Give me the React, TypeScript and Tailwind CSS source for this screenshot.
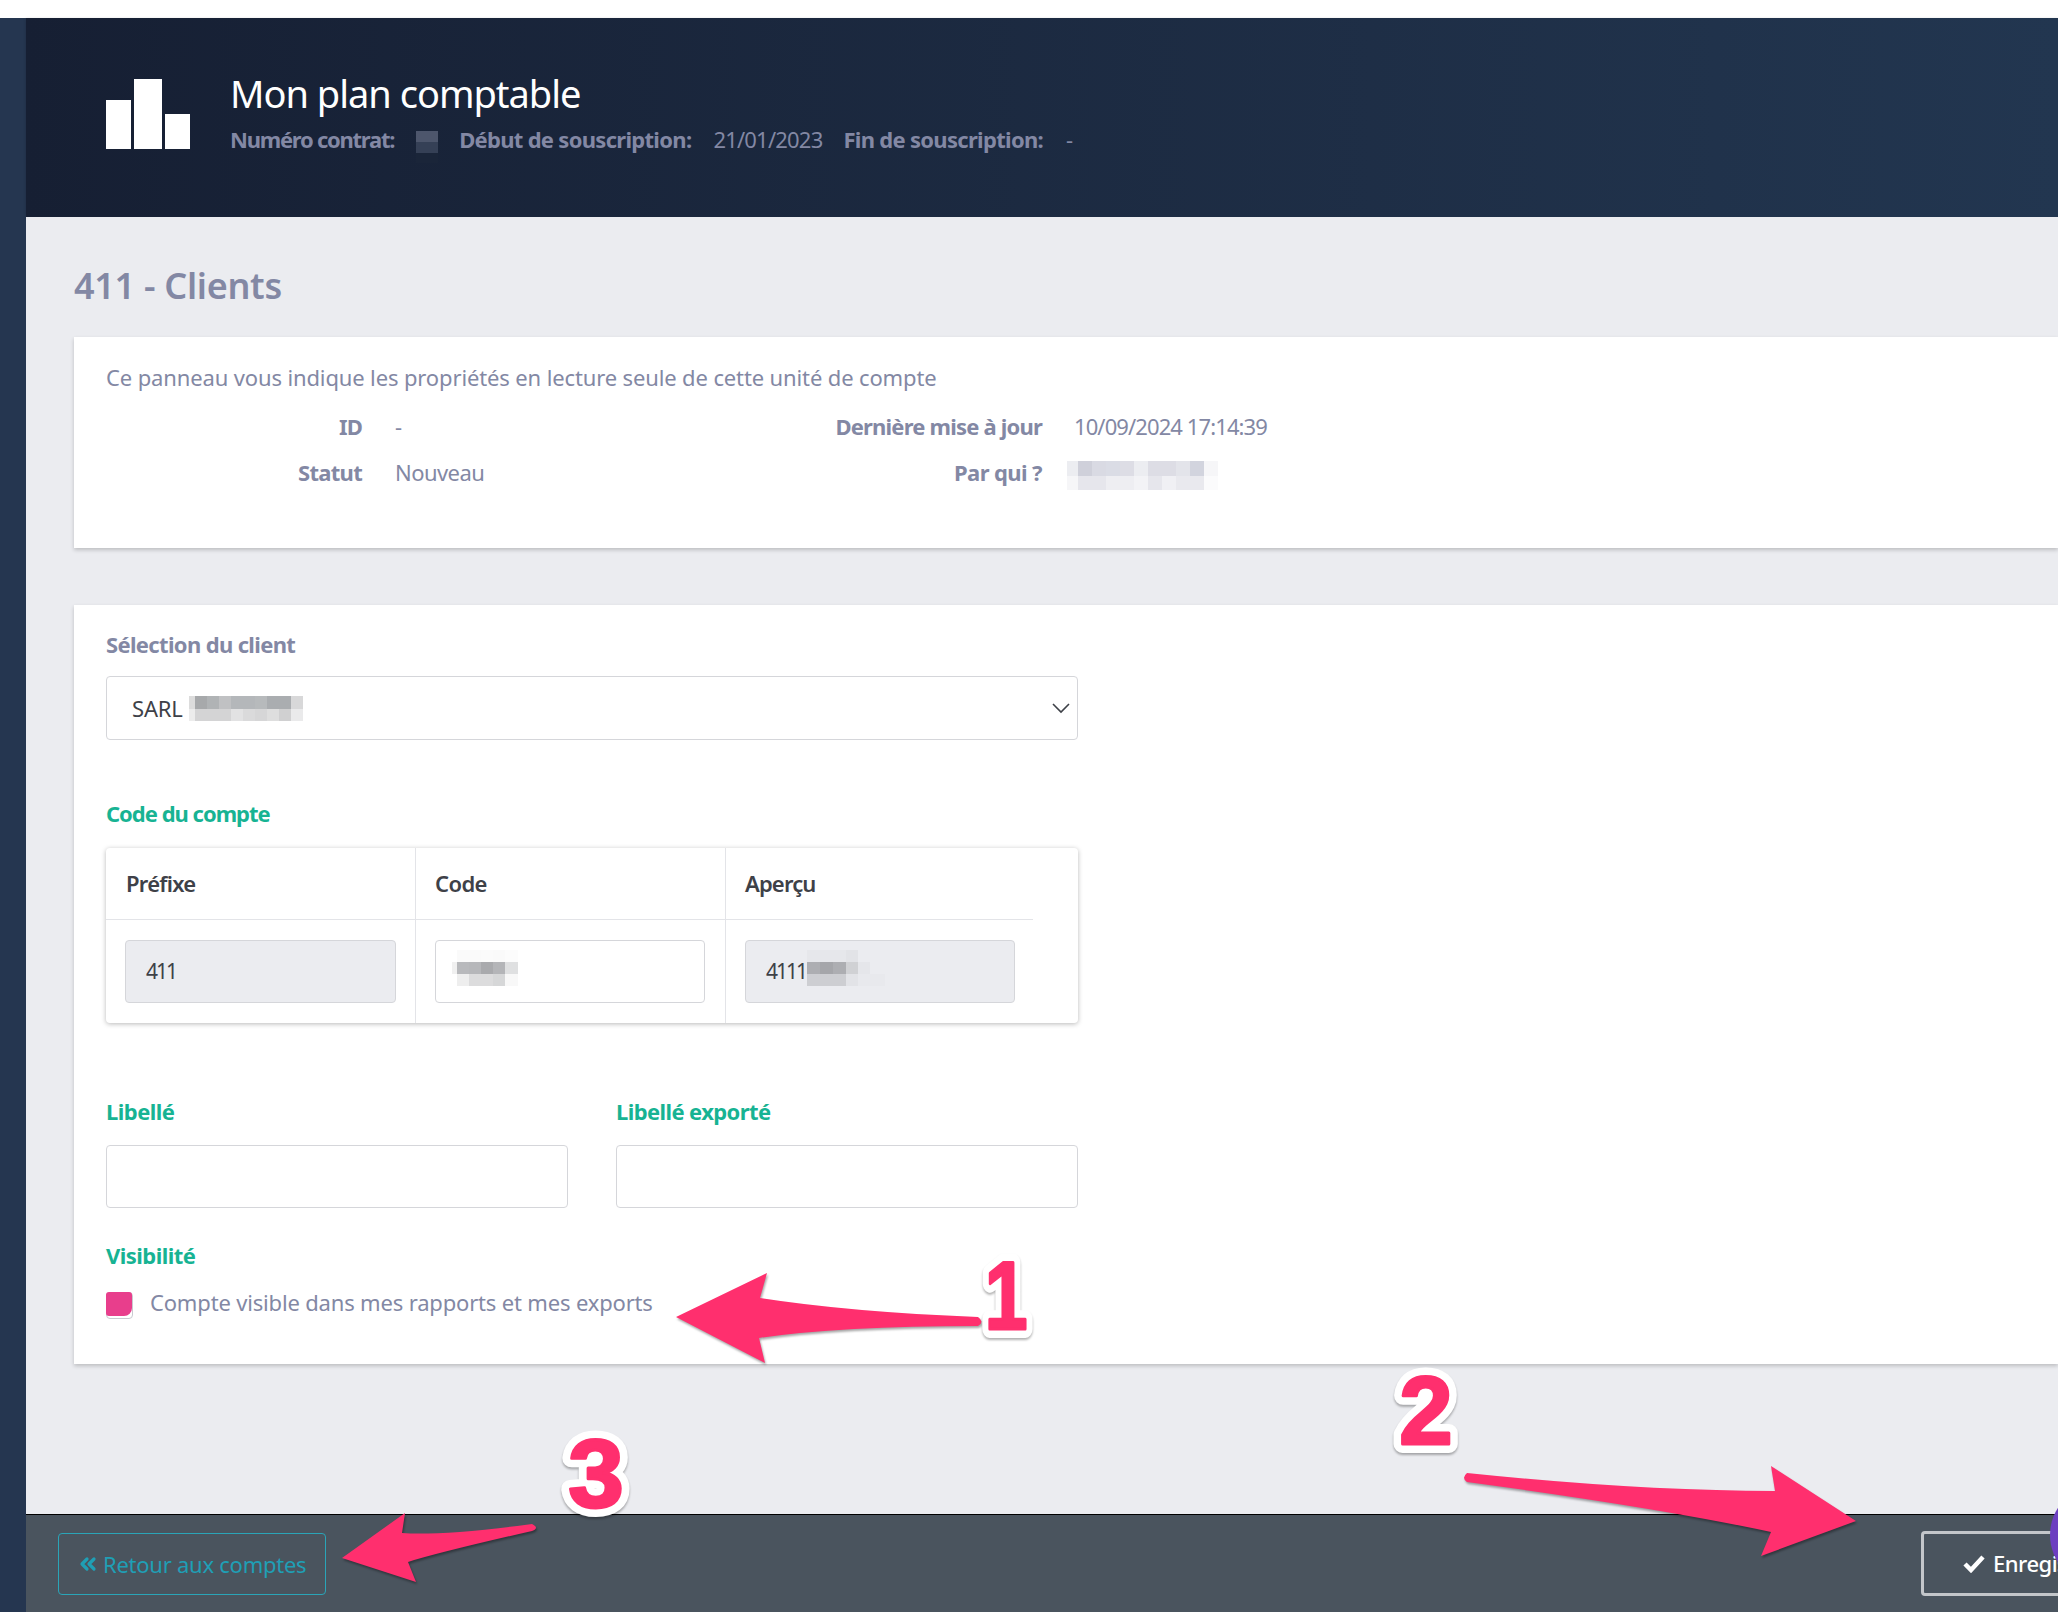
import { ChevronsLeft } from "lucide-react";

const F = "font-['Noto_Sans',sans-serif]";

type Cell = [number, number, number, number, string];

function Mosaic({ w, h, cells, className }: { w: number; h: number; cells: Cell[]; className?: string }) {
  return (
    <svg width={w} height={h} viewBox={`0 0 ${w} ${h}`} className={`shrink-0 ${className ?? ""}`}>
      {cells.map((c, i) => (
        <rect key={i} x={c[0]} y={c[1]} width={c[2]} height={c[3]} fill={c[4]} />
      ))}
    </svg>
  );
}

function row(y: number, h: number, startX: number, cols: [number, string][]): Cell[] {
  let x = startX;
  return cols.map(([w, c]) => {
    const cell: Cell = [x, y, w, h, c];
    x += w;
    return cell;
  });
}

const parQui: Cell[] = [
  ...row(0, 15, 0, [
    [11, "#ecedf1"], [14, "#cfd0da"], [14, "#d9dae3"], [14, "#dadce5"], [14, "#dddde5"], [14, "#ecedf1"],
    [14, "#dddde5"], [14, "#dddde5"], [14, "#e3e4ea"], [14, "#d2d4de"], [14, "#f6f6f8"],
  ]),
  ...row(15, 14, 0, [
    [11, "#f6f6f8"], [14, "#e6e6ec"], [14, "#e6e6ec"], [14, "#eeeef2"], [14, "#eeeef2"], [14, "#f3f3f6"],
    [14, "#e6e6ec"], [14, "#f0f0f4"], [14, "#e9e9ee"], [14, "#e9e9ee"], [14, "#fbfbfc"],
  ]),
];

const sarl: Cell[] = [
  ...row(0, 13, 0, [
    [6, "#dcdcdc"], [12, "#a7a9ab"], [12, "#b0b3b5"], [12, "#c0c1c3"], [12, "#b4b7ba"], [12, "#b4b7ba"],
    [12, "#b7babc"], [12, "#aaadb0"], [12, "#aaadb0"], [12, "#d8d8d9"],
  ]),
  ...row(13, 12, 0, [
    [6, "#ececec"], [12, "#d4d4d5"], [12, "#d4d4d5"], [12, "#d4d4d5"], [12, "#e2e2e3"], [12, "#dadadb"],
    [12, "#d6d6d7"], [12, "#dedede"], [12, "#d0d0d1"], [12, "#eaeaeb"],
  ]),
];

const codeM: Cell[] = [
  ...row(0, 12, 5, [[12, "#fafafa"], [12, "#fafafa"], [12, "#fbfbfb"], [12, "#fafafa"], [13, "#fcfcfc"]]),
  ...row(12, 12, 0, [[5, "#f0f0f0"], [12, "#b8b9bc"], [12, "#b6b7ba"], [12, "#a9aaad"], [12, "#b4b5b8"], [13, "#dfe0e1"]]),
  ...row(24, 12, 5, [[12, "#eeeeee"], [12, "#dcdcdd"], [12, "#dcdcdd"], [12, "#d6d7d8"], [13, "#f8f8f8"]]),
];

const apercuM: Cell[] = [
  ...row(0, 12, 0, [[39, "#e6e7eb"], [12, "#e2e3e7"]]),
  ...row(12, 12, 0, [[13, "#adaeb2"], [13, "#a5a6aa"], [13, "#adaeb2"], [12, "#d0d1d4"], [12, "#e5e6ea"]]),
  ...row(24, 12, 0, [[39, "#cdced2"], [12, "#e2e3e7"], [27, "#e8e9ed"]]),
];

function Digit({ t, x, y, sx = 1 }: { t: string; x: number; y: number; sx?: number }) {
  const common = {
    x: 0,
    y,
    textAnchor: "middle" as const,
    fontFamily: "'Liberation Sans', sans-serif",
    fontWeight: 700,
    fontSize: 96,
    strokeLinejoin: "round" as const,
  };
  return (
    <g transform={`translate(${x} 0) scale(${sx} 1)`} style={{ filter: "drop-shadow(0 2px 1px rgba(0,0,0,0.3))" }}>
      <text {...common} fill="#fff" stroke="#fff" strokeWidth={18}>
        {t}
      </text>
      <text {...common} fill="#ff2f6e" stroke="#ff2f6e" strokeWidth={3}>
        {t}
      </text>
    </g>
  );
}

function Overlay() {
  return (
    <svg width={2058} height={1612} viewBox="0 0 2058 1612" className="pointer-events-none absolute left-0 top-0">
      <g fill="#ff2f6e" style={{ filter: "drop-shadow(1px 2px 1px rgba(0,0,0,0.35))" }}>
        <path d="M676 1317 L767 1273 L760 1298 Q850 1312 978 1317 Q985 1322 978 1326 Q840 1326 759 1338 L765 1363 Z" />
        <path d="M342 1558 L405 1513 L402 1533 Q440 1536 532 1524 Q540 1528 532 1531 Q440 1552 408 1562 L416 1582 Z" />
        <path d="M1856 1521 L1771 1466 L1775 1491 Q1640 1491 1467 1473 Q1461 1478 1467 1482 Q1660 1508 1771 1532 L1761 1556 Z" />
      </g>
      <Digit t="1" x={1006} y={1329} sx={0.8} />
      <Digit t="2" x={1426} y={1444} />
      <Digit t="3" x={596} y={1507} sx={1.04} />
    </svg>
  );
}

export default function App() {
  return (
    <div className={`relative flex h-[1612px] w-[2058px] flex-col overflow-hidden bg-white ${F}`}>
      <div className="h-[18px] shrink-0 bg-white" />
      <div className="flex min-h-0 flex-1">
        <div className="w-[26px] shrink-0 bg-[#253650]" />
        <div className="flex min-w-0 flex-1 flex-col">
          <header className="flex h-[199px] shrink-0 bg-gradient-to-r from-[#161f33] to-[#223650] pl-[80px] shadow-[0_1px_3px_rgba(0,0,0,0.2)]">
            <div className="mt-[61px] flex h-[70px] items-end gap-[3px]">
              <div className="h-[49px] w-[25px] bg-white" />
              <div className="h-[70px] w-[28px] bg-white" />
              <div className="h-[35px] w-[25px] bg-white" />
            </div>
            <div className="ml-[40px] mt-[51px]">
              <h1 className="text-[38px] leading-[48px] tracking-[-1px] text-white">Mon plan comptable</h1>
              <div className="mt-[7px] flex items-center text-[22px] leading-[30px] text-[#8388a4]">
                <b className="font-bold tracking-[-1.25px]">Numéro contrat:</b>
                <Mosaic
                  className="-my-[2px] ml-[22px] translate-y-[8px]"
                  w={22}
                  h={32}
                  cells={[
                    [0, 0, 22, 11, "#4d566c"],
                    [0, 11, 22, 11, "#354056"],
                    [0, 22, 22, 10, "#1a2539"],
                  ]}
                />
                <b className="ml-[21px] font-bold tracking-[-0.7px]">Début de souscription:</b>
                <span className="ml-[22px] tracking-[-0.8px]">21/01/2023</span>
                <b className="ml-[21px] font-bold tracking-[-0.7px]">Fin de souscription:</b>
                <span className="ml-[23px]">-</span>
              </div>
            </div>
          </header>

          <main className="flex min-h-0 flex-1 flex-col bg-[#ebecf0] pl-[48px] pt-[45px]">
            <h2 className="text-[36px] font-semibold leading-[48px] tracking-[-0.3px] text-[#8388a4]">411 - Clients</h2>

            <section className="mt-[27px] h-[211px] shrink-0 bg-white pl-[32px] pt-[25px] text-[22px] text-[#8388a4] shadow-[0_2px_4px_rgba(0,0,0,0.2)]">
              <p className="leading-[30px] tracking-[-0.13px]">Ce panneau vous indique les propriétés en lecture seule de cette unité de compte</p>
              <div className="mt-[19px] grid grid-cols-[256px_330px_350px_auto] grid-rows-[30px_30px] gap-y-[16px] leading-[30px]">
                <b className="text-right font-bold tracking-[-0.8px]">ID</b>
                <span className="pl-[33px]">-</span>
                <b className="text-right font-bold tracking-[-0.8px]">Dernière mise à jour</b>
                <span className="pl-[32px] tracking-[-0.9px]">10/09/2024 17:14:39</span>
                <b className="text-right font-bold tracking-[-0.7px]">Statut</b>
                <span className="pl-[33px] tracking-[-0.55px]">Nouveau</span>
                <b className="text-right font-bold tracking-[-0.6px]">Par qui ?</b>
                <div className="pl-[25px] pt-[4px]">
                  <Mosaic w={151} h={29} cells={parQui} />
                </div>
              </div>
            </section>

            <section className="mt-[57px] h-[759px] shrink-0 bg-white pl-[32px] pt-[25px] shadow-[0_2px_4px_rgba(0,0,0,0.2)]">
              <div className="w-[972px]">
                <label className="block text-[22px] font-bold leading-[28px] tracking-[-0.65px] text-[#8388a4]">Sélection du client</label>
                <div className="mt-[18px] flex h-[64px] items-center justify-between rounded-[4px] border border-[#d5d6da] pl-[25px] pr-[6px] text-[22px] text-[#3e4148]">
                  <div className="flex items-center gap-[6px]">
                    <span className="tracking-[-0.2px]">SARL</span>
                    <Mosaic w={114} h={25} cells={sarl} />
                  </div>
                  <svg width="20" height="12" viewBox="0 0 20 12" fill="none" stroke="#3e4148" strokeWidth="1.6">
                    <path d="M2 2l8 8 8-8" />
                  </svg>
                </div>

                <label className="mt-[59px] block text-[22px] font-bold leading-[28px] tracking-[-1px] text-[#17b393]">Code du compte</label>
                <div className="mt-[21px] flex h-[175px] rounded-[4px] bg-white shadow-[0_1px_5px_rgba(0,0,0,0.28)]">
                  <div className="w-[310px] shrink-0 border-r border-[#e3e4e8]">
                    <div className="flex h-[72px] items-center border-b border-[#e3e4e8] pl-[20px] text-[22px] font-semibold tracking-[-0.75px] text-[#3e4148]">Préfixe</div>
                    <div className="px-[19px] pt-[20px]">
                      <div className="flex h-[63px] w-[271px] items-center rounded-[4px] border border-[#d5d6da] bg-[#ebecf0] pl-[20px] text-[21px] tracking-[-2px] text-[#3e4148]">411</div>
                    </div>
                  </div>
                  <div className="w-[310px] shrink-0 border-r border-[#e3e4e8]">
                    <div className="flex h-[72px] items-center border-b border-[#e3e4e8] pl-[19px] text-[22px] font-semibold tracking-[-0.6px] text-[#3e4148]">Code</div>
                    <div className="px-[19px] pt-[20px]">
                      <div className="flex h-[63px] w-[270px] items-center rounded-[4px] border border-[#d5d6da] bg-white pl-[16px]">
                        <Mosaic className="-mt-[7px]" w={66} h={36} cells={codeM} />
                      </div>
                    </div>
                  </div>
                  <div className="w-[307px] shrink-0">
                    <div className="flex h-[72px] items-center border-b border-[#e3e4e8] pl-[19px] text-[22px] font-semibold tracking-[-0.85px] text-[#3e4148]">Aperçu</div>
                    <div className="px-[19px] pt-[20px]">
                      <div className="flex h-[63px] w-[270px] items-center rounded-[4px] border border-[#d5d6da] bg-[#ebecf0] pl-[20px] text-[21px] text-[#3e4148]">
                        <span className="tracking-[-2px]">4111</span>
                        <Mosaic className="-mt-[7px] ml-[1px]" w={78} h={36} cells={apercuM} />
                      </div>
                    </div>
                  </div>
                </div>

                <div className="mt-[74px] grid grid-cols-2 gap-x-[48px]">
                  {[
                    { l: "Libellé", c: "tracking-[-0.55px]" },
                    { l: "Libellé exporté", c: "tracking-[-0.6px]" },
                  ].map(({ l, c }) => (
                    <div key={l}>
                      <label className={`block text-[22px] font-bold leading-[28px] text-[#17b393] ${c}`}>{l}</label>
                      <div className="mt-[20px] h-[63px] rounded-[4px] border border-[#d5d6da] bg-white" />
                    </div>
                  ))}
                </div>

                <label className="mt-[33px] block text-[22px] font-bold leading-[28px] tracking-[-0.55px] text-[#17b393]">Visibilité</label>
                <div className="mt-[18px] flex items-center gap-[17px] text-[22px] leading-[30px] text-[#8388a4]">
                  <div className="h-[27px] w-[27px] translate-y-[3px] rounded-[4px] border border-[#c9cad0] bg-white">
                    <div className="-ml-px -mt-px h-[24px] w-[26px] rounded-[3px] rounded-br-[8px] bg-[#e83e8c]" />
                  </div>
                  <span className="tracking-[-0.17px]">Compte visible dans mes rapports et mes exports</span>
                </div>
              </div>
            </section>
          </main>

          <footer className="flex h-[98px] shrink-0 items-center justify-between border-t border-black bg-[#4a545e] pl-[32px]">
            <button className="mt-[1px] flex h-[62px] w-[268px] items-center gap-[3px] rounded-[4px] border border-[#2aa5b8] pl-[17px] text-[22px] text-[#1f9fb5]">
              <ChevronsLeft size={24} strokeWidth={3.2} />
              <span className="tracking-[-0.25px]">Retour aux comptes</span>
            </button>
            <button className="-mr-[100px] flex h-[65px] w-[237px] items-center gap-[8px] rounded-[4px] border-[3px] border-[#c3c6ca] pl-[39px] text-[22px] font-medium tracking-[-0.5px] text-white">
              <svg width="22" height="18" viewBox="0 0 22 18" fill="none" stroke="#fff" strokeWidth="4.5">
                <path d="M2 9l6 6L20 2" />
              </svg>
              <span>Enregistrer</span>
            </button>
          </footer>
        </div>
      </div>
      <div className="absolute left-[2050px] top-[1485px] h-[100px] w-[100px] rounded-full bg-[#6c3fc0]" />
      <Overlay />
    </div>
  );
}
